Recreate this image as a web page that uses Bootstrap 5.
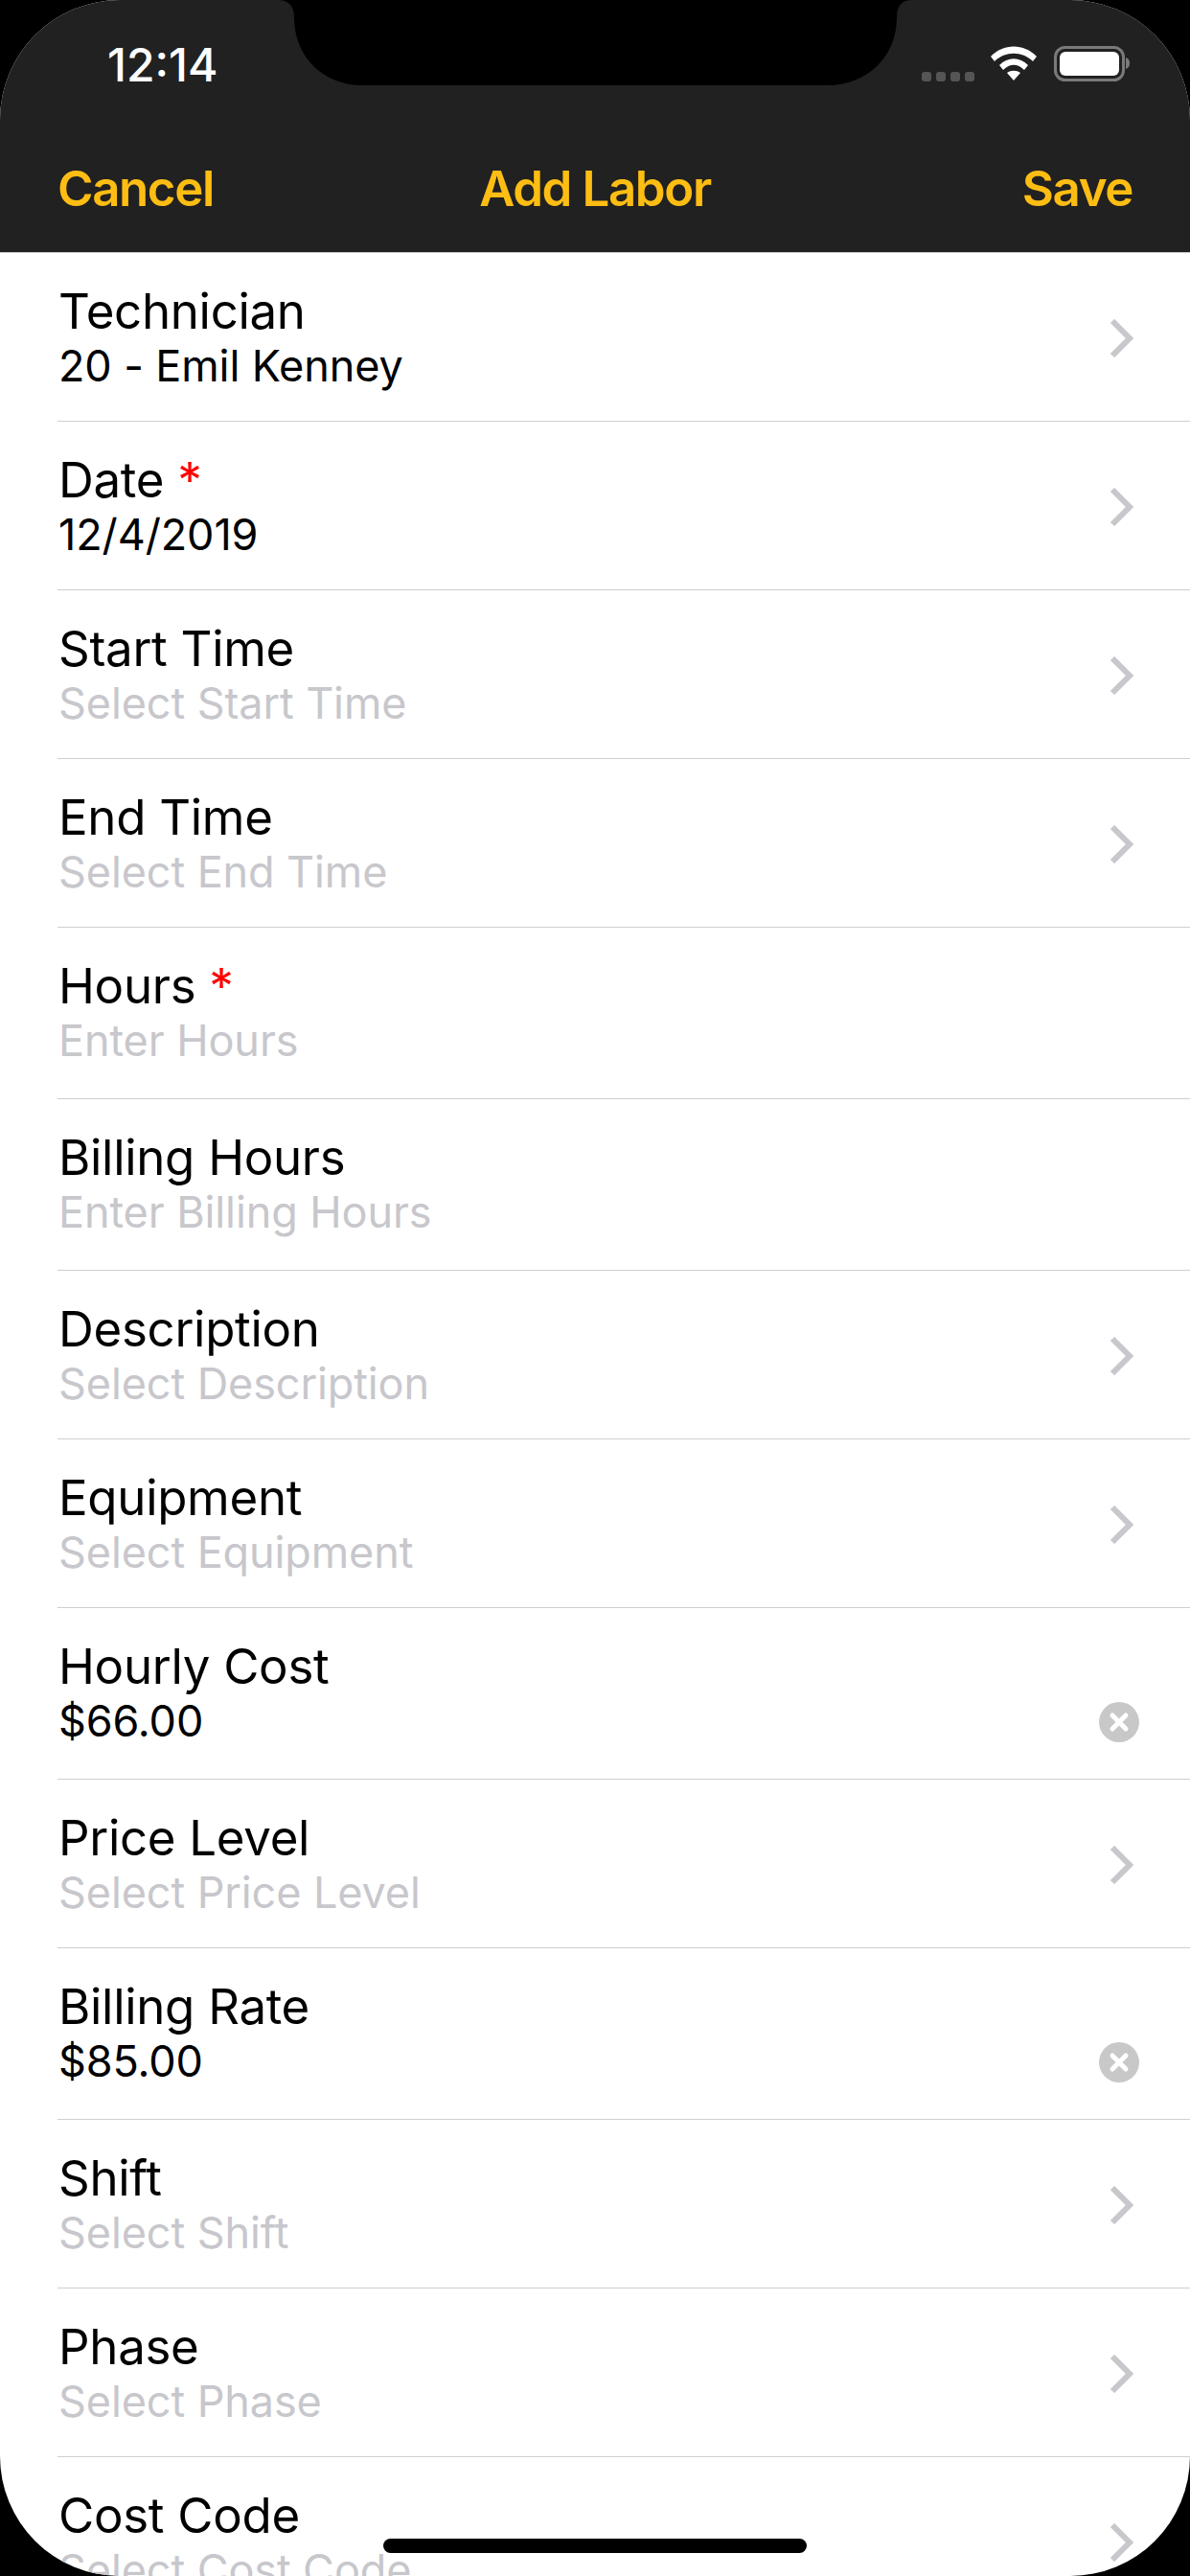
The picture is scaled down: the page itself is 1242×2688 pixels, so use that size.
<!DOCTYPE html>
<html lang="en">

<head>
    <meta charset="UTF-8">
    <meta name="viewport" content="width=device-width, initial-scale=1.0">
    <title>Add Labor</title>
    <link href="https://cdn.jsdelivr.net/npm/bootstrap@5.3.0/dist/css/bootstrap.min.css" rel="stylesheet">
    <style>
        html, body { height: 100%; margin: 0; background: #000; }
        body { font-family: Inter, "Liberation Sans", sans-serif; }
        .phone { position: relative; width: 1242px; height: 2688px; overflow: hidden; border-radius: 125px; background: #fff; }
        .top-bar { background: #212121; height: 264px; border-bottom: 1px solid #c8c8c8; }
        .status-row { height: 131px; padding: 48px 62px 0 112px; }
        .clock { color: #fff; font-size: 48px; line-height: 48px; margin-top: -4px; font-weight: 500; }
        .sig-wrap { margin: 0 17px 1px 0; gap: 5px; }
        .sig-dot { width: 10px; height: 10px; border-radius: 3px; background: #555; }
        .nav-row { padding: 0 60px 0 60px; height: 132px; }
        .nav-txt { flex: 1; color: #fdbd13; font-size: 51px; font-weight: 600; text-decoration: none; letter-spacing: -1.4px; white-space: nowrap; }
        .notch { position: absolute; top: 0; left: 290px; }
        .form-row { height: 176px; margin-left: 60px; padding: 28px 53px 0 1px !important; border: 0; border-bottom: 2px solid #cfcfcf; border-radius: 0 !important; background: transparent; }
        .form-row.tall { height: 179px; }
        .row-label { font-size: 51px; line-height: 66px; letter-spacing: -.3px; color: #000; }
        .row-value { font-size: 45px; line-height: 48px; letter-spacing: -.1px; color: #000; }
        .row-value.empty { color: #c7c7cc; }
        .req { color: #f00; }
        .chev { margin: 41px 5px 0 0; }
        .clear-x { margin-top: 70px; }
        .home-bar { position: absolute; left: 400px; top: 2649px; width: 442px; height: 15px; border-radius: 8px; background: #000; }
    </style>
</head>

<body>
    <div class="phone">
        <!--Top bar-->
        <div class="top-bar">
            <div class="status-row d-flex justify-content-between align-items-start">
                <span class="clock">12:14</span>
                <div class="d-flex align-items-end">
                    <div class="d-flex sig-wrap">
                        <span class="sig-dot"></span><span class="sig-dot"></span><span class="sig-dot"></span><span class="sig-dot"></span>
                    </div>
                    <svg width="146" height="38" viewBox="0 0 146 38">
                        <path d="M0 11C13-3 35-3 48 11L44 16C33 5 15 5 4 16Z M9 20C18 11 30 11 39 20L35 25C28 18 20 18 13 25Z" fill="#fff"/>
                        <path d="M17 28C21 25 27 25 31 28L24 36Z" fill="#fff"/>
                        <rect x="67.5" y="1.5" width="71" height="34" rx="10" fill="none" stroke="#7a7a7a" stroke-width="3"/>
                        <rect x="72" y="6" width="62" height="25" rx="6" fill="#fff"/>
                        <path d="M141 12C144 13 145 15 145 18C145 21 144 23 141 24Z" fill="#7a7a7a"/>
                    </svg>
                </div>
            </div>
            <nav class="nav-row d-flex align-items-center">
                <a class="nav-txt" href="#">Cancel</a>
                <span class="nav-txt text-center">Add Labor</span>
                <a class="nav-txt text-end" href="#">Save</a>
            </nav>
        </div>
        <svg class="notch" width="662" height="90" viewBox="0 0 662 90">
            <path d="M0 0C10 0 17 5 17 18C17 60 48 89 88 89H574C614 89 646 60 646 18C646 5 652 0 662 0Z" fill="#000"/>
        </svg>

        <!--Fields, filled from the list below-->
        <div id="fields" class="list-group list-group-flush"></div>

        <div class="home-bar"></div>
    </div>

    <script>
        const fields = [
            { label: "Technician", value: "20 - Emil Kenney", icon: "chev" },
            { label: "Date", value: "12/4/2019", icon: "chev", req: true },
            { label: "Start Time", hint: "Select Start Time", icon: "chev" },
            { label: "End Time", hint: "Select End Time", icon: "chev" },
            { label: "Hours", hint: "Enter Hours", req: true },
            { label: "Billing Hours", hint: "Enter Billing Hours" },
            { label: "Description", hint: "Select Description", icon: "chev" },
            { label: "Equipment", hint: "Select Equipment", icon: "chev" },
            { label: "Hourly Cost", value: "$66.00", icon: "clear" },
            { label: "Price Level", hint: "Select Price Level", icon: "chev" },
            { label: "Billing Rate", value: "$85.00", icon: "clear" },
            { label: "Shift", hint: "Select Shift", icon: "chev" },
            { label: "Phase", hint: "Select Phase", icon: "chev" },
            { label: "Cost Code", hint: "Select Cost Code", icon: "chev" }
        ];

        const chevSvg = '<svg class="chev" width="26" height="40" viewBox="0 0 26 40"><path d="M3 2L21 20L3 38" fill="none" stroke="#c7c7cc" stroke-width="6"/></svg>';
        const clearSvg = '<svg class="clear-x" width="42" height="42" viewBox="0 0 42 42"><circle cx="21" cy="21" r="21" fill="#c8c8c8"/><path d="M14 14L28 28M28 14L14 28" stroke="#fff" stroke-width="5" stroke-linecap="round"/></svg>';

        const list = document.getElementById("fields");
        fields.forEach(f => {
            const row = document.createElement("div");
            row.className = "list-group-item form-row d-flex justify-content-between align-items-start";
            if (f.icon !== "chev") row.classList.add("tall");
            const star = f.req ? ' <span class="req">*</span>' : '';
            const val = f.value ? `<div class="row-value">${f.value}</div>` : `<div class="row-value empty">${f.hint}</div>`;
            const icon = f.icon === "chev" ? chevSvg : f.icon === "clear" ? clearSvg : '';
            row.innerHTML = `<div><div class="row-label">${f.label}${star}</div>${val}</div>${icon}`;
            list.appendChild(row);
        });
    </script>

    <script src="https://cdn.jsdelivr.net/npm/bootstrap@5.3.0/dist/js/bootstrap.bundle.min.js"></script>
</body>

</html>
